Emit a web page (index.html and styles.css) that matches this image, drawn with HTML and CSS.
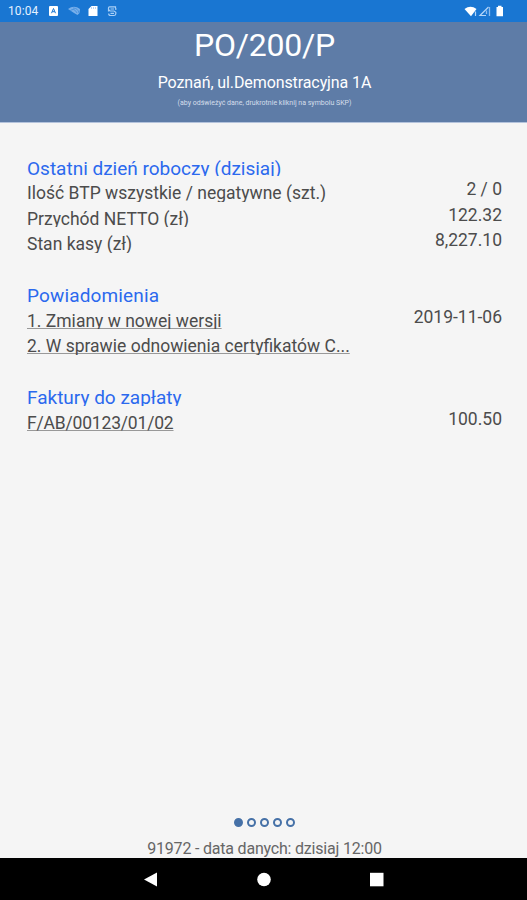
FILE: index.html
```html
<!DOCTYPE html>
<html lang="pl">
<head>
<meta charset="utf-8">
<title>PO/200/P</title>
<link rel="stylesheet" href="styles.css">
</head>
<body>
<div class="statusbar">
  <span class="clock">10:04</span>
  <svg class="left-icons" width="72" height="14" viewBox="0 0 72 14">
    <rect x="1" y="2" width="9" height="10" rx="1" fill="#fff"/>
    <path d="M3.5 9.2L5.5 4.5L7.5 9.2M4.2 7.7H6.8" fill="none" stroke="#1976d2" stroke-width="1"/>
    <path d="M20 5Q26 .5 32 5L31.500 9L29.500 11L26 9Z" fill="#78afea"/>
    <path d="M22 7Q26 3 29 9M25 4Q30 4 31 9" fill="none" stroke="#3e8bdc" stroke-width=".8"/>
    <path d="M43.500 2H49.500V12H40.500V5Z" fill="#fff"/>
    <path d="M43.500 3V5M45.500 3V5M47.500 3V5" stroke="#9cc6f2" stroke-width=".7"/>
    <path d="M67.500 4.500V2.800H61.500Q60.500 2.800 60.500 4V5.500L62 7H66L67.800 8.200V10Q67.500 11.500 66 11.500H62.500Q60.700 11.500 60.700 9.500M60.500 7.500V6M67.800 6V4M62.500 5H66M62.500 9.300H66" fill="none" stroke="#a9cff6" stroke-width="1.200"/>
  </svg>
  <svg class="right-icons" width="42" height="14" viewBox="0 0 42 14">
    <path d="M.5 5Q6.500 .5 12.500 5L7 12.200Z" fill="#fff"/>
    <path d="M11.500 7.500V12M24.500 3L16 11.500H22" fill="none" stroke="#b3d5f8" stroke-width="1.200"/>
    <path d="M25.500 3V12M22.500 6.500V10" stroke="#8bbcf0" stroke-width="1.300"/>
    <path d="M32.500 3H34V1.800H37.500V3H39V12.300H32.500Z" fill="#fff"/>
  </svg>
</div>
<header class="header">
  <h1 class="code">PO/200/P</h1>
  <p class="address">Poznań, ul.Demonstracyjna 1A</p>
  <p class="hint">(aby odświeżyć dane, drukrotnie kliknij na symbolu SKP)</p>
</header>
<main class="content">
  <section class="section">
    <h2 class="title today">Ostatni dzień roboczy (dzisiaj)</h2>
    <div class="row"><span class="label">Ilość BTP wszystkie / negatywne (szt.)</span><span class="value">2 / 0</span></div>
    <div class="row"><span class="label">Przychód NETTO (zł)</span><span class="value">122.32</span></div>
    <div class="row"><span class="label">Stan kasy (zł)</span><span class="value">8,227.10</span></div>
  </section>
  <section class="section">
    <h2 class="title notices">Powiadomienia</h2>
    <div class="row"><a class="label link">1. Zmiany w nowej wersji</a><span class="value">2019-11-06</span></div>
    <div class="row"><a class="label link">2. W sprawie odnowienia certyfikatów C...</a></div>
  </section>
  <section class="section">
    <h2 class="title">Faktury do zapłaty</h2>
    <div class="row"><a class="label link invoice">F/AB/00123/01/02</a><span class="value">100.50</span></div>
  </section>
</main>
<div class="dots"><i class="dot active"></i><i class="dot"></i><i class="dot"></i><i class="dot"></i><i class="dot"></i></div>
<footer class="version">91972 - data danych: dzisiaj 12:00</footer>
<nav class="navbar">
  <svg width="14" height="16" viewBox="0 0 14 16"><path d="M0 7.500L13 .5V14.500Z" fill="#fff"/></svg>
  <svg width="14" height="16" viewBox="0 0 14 16"><circle cx="7" cy="7.500" r="6.800" fill="#fff"/></svg>
  <svg width="14" height="16" viewBox="0 0 14 16"><rect y=".8" width="13.500" height="13.500" fill="#fff"/></svg>
</nav>
</body>
</html>
```
FILE: styles.css
```css
* { box-sizing: border-box; }
body {
  margin: 0;
  height: 900px;
  display: flex;
  flex-direction: column;
  overflow: hidden;
  background: #f5f5f5;
  color: #4c4c4c;
  font-family: Roboto, "Liberation Sans", sans-serif;
}
h1, h2, p { margin: 0; font-weight: 400; }
.statusbar {
  height: 22px;
  flex: none;
  display: flex;
  align-items: center;
  padding: 0 21px 0 8px;
  background: #1976d2;
  color: #e4f1ff;
}
.clock { width: 40px; font-size: 12px; line-height: 22px; letter-spacing: .1px; }
.right-icons { margin-left: auto; }
.header {
  height: 101px;
  flex: none;
  padding-left: 2px;
  background: #5e7ca7;
  border-bottom: 1px solid #b4c3dc;
  color: #fff;
  text-align: center;
  white-space: nowrap;
}
.code { font-size: 32px; line-height: 46px; letter-spacing: -.2px; }
.address { font-size: 16px; line-height: 30px; letter-spacing: -.1px; }
.hint { font-size: 7px; line-height: 11px; color: #d5deeb; }
.content { padding: 27.500px 25px 0 27px; }
.section { margin-bottom: 25.500px; white-space: nowrap; }
.title {
  height: 25.500px;
  overflow: hidden;
  color: #2b69ee;
  font-size: 19px;
  line-height: 36px;
}
.notices { letter-spacing: .15px; }
.row {
  height: 25.500px;
  overflow: hidden;
  display: flex;
  justify-content: space-between;
  font-size: 17.500px;
}
.label { line-height: 35px; }
.value { line-height: 27px; }
.link {
  text-decoration: underline;
  text-decoration-color: #999;
  text-decoration-thickness: 1px;
  text-decoration-skip-ink: none;
}
.invoice { letter-spacing: -.18px; }
.dots { margin-top: auto; display: flex; justify-content: center; gap: 4px; height: 9px; padding-left: 1px; }
.dot { width: 9px; height: 9px; border: 2px solid #4671a7; border-radius: 50%; background: #f5f5f5; }
.active { background: #4671a7; }
.version {
  flex: none;
  height: 31px;
  overflow: hidden;
  padding-left: 2px;
  text-align: center;
  font-size: 16px;
  line-height: 43px;
  letter-spacing: -.2px;
  color: #666;
}
.navbar {
  height: 42px;
  flex: none;
  display: flex;
  justify-content: space-between;
  align-items: center;
  padding: 1px 143px 0 144px;
  background: #000;
}
```
